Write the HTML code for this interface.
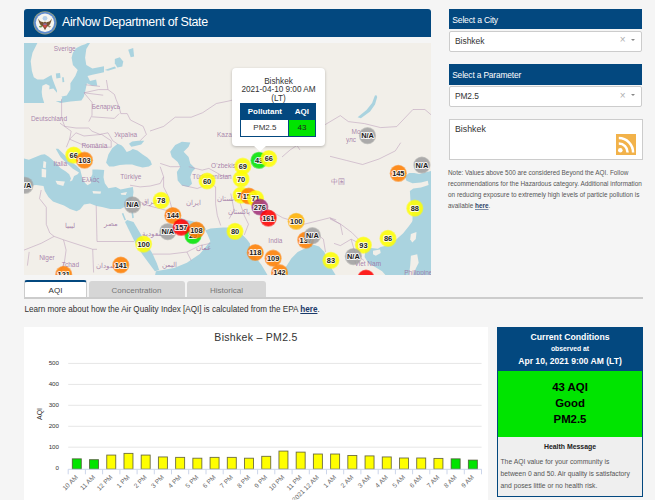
<!DOCTYPE html>
<html><head><meta charset="utf-8"><style>
*{box-sizing:border-box;margin:0;padding:0}
html,body{width:655px;height:500px;overflow:hidden;background:#f5f5f5;font-family:"Liberation Sans",sans-serif;color:#333}
.abs{position:absolute}
.t1{position:absolute;white-space:nowrap;line-height:1}
</style></head><body>
<div class="abs" style="left:24px;top:9px;width:407px;height:28px;background:#03487f;border-radius:3px 3px 0 0"></div>
<svg class="abs" style="left:33px;top:11px" width="24" height="24" viewBox="0 0 24 24">
  <circle cx="12" cy="11.8" r="11.6" fill="#a3a878"/>
  <circle cx="12" cy="11.8" r="10.9" fill="#5f8cd0"/>
  <circle cx="12" cy="11.8" r="9.2" fill="#f6f5ee"/>
  <circle cx="12" cy="7.3" r="2.4" fill="#b5d0ea"/>
  <path d="M5.3 7.6 Q5.8 14 10.3 16 L12 19.2 L13.7 16 Q18.2 14 18.7 7.6 Q17.5 10.5 15.5 10.8 Q14 11 13.2 11.6 L12 10.4 L10.8 11.6 Q10 11 8.5 10.8 Q6.5 10.5 5.3 7.6Z" fill="#75532f"/>
  <rect x="10.4" y="12.6" width="3.2" height="3.8" fill="#d04a4a"/>
  <rect x="10.4" y="12.6" width="3.2" height="1" fill="#6a8ad0"/>
  <ellipse cx="7.6" cy="15.6" rx="1.6" ry="0.9" fill="#6a9a50"/>
  <ellipse cx="16.4" cy="15.6" rx="1.4" ry="0.8" fill="#9a8a6a"/>
</svg>
<div class="t1" style="left:62px;top:15.5px;font-size:12.5px;color:#fff;letter-spacing:-0.38px">AirNow Department of State</div>

<div id="map" class="abs" style="left:24px;top:43px;width:407px;height:232px;background:#f2efe9;overflow:hidden">
<svg class="abs" style="left:0;top:0" width="407" height="232" viewBox="0 0 407 232">
<g transform="translate(-24 -43)">
<polygon points="24.0,43.0 37.4,43.0 32.5,52.8 30.7,61.3 31.9,71.1 33.8,77.2 37.4,79.6 43.5,79.6 49.6,76.0 51.5,75.0 52.7,79.6 55.1,85.7 57.0,90.6 57.0,94.3 54.5,96.7 50.3,96.7 49.0,91.9 49.6,85.7 46.0,83.9 42.3,85.7 41.7,91.9 42.3,96.7 44.2,103.0 24.0,103.0" fill="#aad3df"/>
<polygon points="87.5,43.0 90.0,43.0 86.3,49.1 85.1,57.7 86.3,65.0 92.4,68.6 104.0,66.2 104.0,72.3 92.4,74.8 87.5,76.0 90.0,80.9 96.1,79.6 97.3,85.7 92.4,85.7 86.9,83.3 85.1,91.9 83.8,96.7 81.4,100.4 70.4,101.6 60.6,103.0 54.5,100.4 58.2,99.2 60.6,96.7 66.7,95.5 70.4,89.4 70.4,83.3 75.3,76.0 77.7,69.9 72.9,65.0 71.6,57.7 72.9,52.8 76.5,47.9 81.4,45.4 85.1,44.2" fill="#aad3df"/>
<polygon points="55.8,73.5 60.0,72.9 60.6,77.8 56.4,78.4" fill="#aad3df"/>
<polygon points="62.1,77.2 63.7,77.2 64.3,82.1 62.5,82.3" fill="#aad3df"/>
<polygon points="114.8,66.5 116.1,68.2 108.0,70.7 104.7,69.9" fill="#aad3df"/>
<polygon points="114.8,59.0 119.8,57.3 123.2,61.5 122.3,66.5 117.3,67.4 114.8,63.2" fill="#aad3df"/>
<polygon points="128.2,49.7 133.2,48.0 134.1,56.4 130.7,57.3" fill="#aad3df"/>
<polygon points="24.0,158.4 28.9,159.7 35.0,157.2 41.1,154.8 44.8,154.2 48.4,156.6 50.9,158.4 55.8,163.3 60.6,168.2 65.5,171.3 69.2,174.3 71.0,178.6 69.8,181.6 72.2,180.4 74.1,176.1 77.7,174.3 79.0,172.5 72.9,168.8 66.7,163.3 60.6,157.2 57.0,151.1 55.8,148.7 58.2,148.7 64.3,154.8 70.4,160.9 76.5,165.8 80.2,169.4 81.4,174.3 82.6,179.2 85.1,182.9 87.5,185.3 91.2,182.9 90.0,179.2 92.4,174.3 92.4,169.4 97.3,169.4 104.2,169.9 103.5,177.2 104.8,183.3 108.4,188.2 115.8,187.0 120.6,189.4 126.7,188.2 132.9,187.0 133.5,191.9 132.9,196.8 130.4,201.6 128.0,205.3 120.6,209.0 110.2,209.0 102.0,207.0 96.5,206.0 90.0,203.5 84.0,204.5 80.0,209.5 76.6,211.2 70.0,209.0 64.0,205.5 57.0,203.0 53.0,201.5 48.4,197.0 44.8,191.0 43.5,186.0 36.2,185.0 24.0,186.0" fill="#aad3df"/>
<polygon points="106.1,162.8 108.4,154.4 112.2,148.3 117.6,143.7 121.4,145.3 123.7,147.6 126.7,152.1 130.5,150.6 132.8,149.1 137.4,150.6 142.7,154.4 147.3,157.5 150.4,160.5 151.9,164.4 148.9,166.6 142.7,167.4 136.6,165.9 132.1,164.4 126.0,164.4 119.8,165.1 113.7,166.6 109.2,166.6" fill="#aad3df"/>
<polygon points="129.0,143.7 132.1,141.5 138.2,140.7 144.3,140.7 141.2,144.5 135.1,146.0 131.3,146.8" fill="#aad3df"/>
<polygon points="170.2,151.8 175.2,145.1 181.9,141.8 190.3,142.6 188.6,146.8 183.6,151.8 188.6,156.9 190.3,163.6 195.3,168.6 192.0,172.0 190.3,177.0 192.0,183.7 188.6,187.1 181.9,185.4 177.7,180.4 176.9,172.0 180.2,166.9 177.7,161.9 171.8,156.9" fill="#aad3df"/>
<polygon points="127.1,219.9 133.5,222.1 139.9,232.7 146.3,243.4 152.7,254.1 157.0,263.7 159.2,270.1 154.9,271.2 148.5,262.7 142.1,254.1 135.6,243.4 129.2,230.6 125.0,222.1" fill="#aad3df"/>
<polygon points="121.8,213.5 123.3,213.1 126.0,219.9 124.5,220.3" fill="#aad3df"/>
<polygon points="131.4,211.4 132.9,211.4 133.9,217.8 132.2,218.2" fill="#aad3df"/>
<polygon points="180.5,217.8 186.9,219.9 195.5,222.1 204.0,226.3 206.2,229.5 201.9,230.6 195.5,231.7 191.2,227.4 184.8,224.2 180.5,221.0" fill="#aad3df"/>
<polygon points="154.9,275.9 155.9,271.2 174.1,268.0 186.9,262.7 199.8,254.1 210.4,241.3 207.2,233.8 205.1,230.6 210.4,228.5 223.3,227.4 236.1,227.4 240.4,232.7 246.8,239.2 250.0,243.4 250.0,275.9" fill="#aad3df"/>
<polygon points="240.0,232.7 246.4,243.4 252.8,254.1 261.4,264.8 267.8,275.5 269.9,275.9 240.0,275.9" fill="#aad3df"/>
<polygon points="280.6,275.9 285.9,266.9 291.3,258.4 297.7,252.0 306.3,247.7 312.7,244.5 319.1,246.6 324.4,252.0 327.6,260.5 331.9,269.1 336.2,275.9" fill="#aad3df"/>
<polygon points="432.0,170.6 426.1,172.3 419.3,174.0 414.2,173.1 409.1,173.1 404.8,176.5 406.5,180.8 412.5,183.3 421.0,182.5 427.8,180.8 428.6,185.0 421.0,187.6 413.3,188.4 409.9,191.0 410.4,199.5 411.6,207.9 412.5,216.4 412.5,224.9 432.0,224.9" fill="#aad3df"/>
<polygon points="415.8,215.0 413.0,220.6 408.8,226.2 403.2,233.3 396.2,239.6 387.8,245.2 380.7,247.0 377.9,248.7 370.9,248.0 365.3,250.1 364.6,257.1 368.1,262.8 375.1,267.0 382.1,271.2 386.3,276.0 432.0,276.0 432.0,215.0" fill="#aad3df"/>
<polygon points="376.2,95.0 377.2,97.0 375.0,104.5 370.1,111.5 360.9,118.2 357.6,117.2 366.5,109.9 372.1,102.9 374.8,95.8" fill="#aad3df"/>
<polygon points="49.2,89.2 53.4,88.4 57.6,93.4 62.3,97.1 61.0,101.0 49.2,101.0 47.5,95.1" fill="#f2efe9"/>
<polygon points="43.5,160.9 46.2,161.9 45.7,168.2 42.9,167.6" fill="#f2efe9"/>
<polygon points="41.7,168.8 46.2,169.4 46.0,177.4 41.7,177.0" fill="#f2efe9"/>
<polygon points="55.5,180.7 64.9,181.4 63.3,186.0 57.2,184.3" fill="#f2efe9"/>
<polygon points="92.5,191.0 101.1,191.6 100.5,193.8 93.2,193.5" fill="#f2efe9"/>
<polygon points="120.6,193.3 127.0,192.1 125.8,195.0 121.3,194.8" fill="#f2efe9"/>
<polygon points="373.0,250.8 380.0,249.4 380.7,252.9 375.8,255.7 373.0,254.3" fill="#f2efe9"/>
<polygon points="410.9,234.0 416.5,231.9 415.8,238.9 412.3,242.4 410.2,239.6" fill="#f2efe9"/>
<polygon points="410.9,255.7 417.2,254.3 418.7,262.8 415.8,268.4 413.0,276.0 408.8,276.0 410.2,265.6" fill="#f2efe9"/>
</g>
<g transform="translate(-24 -43)" fill="none" stroke="#b89ab8" stroke-width="0.7" stroke-opacity="0.75">
<polyline points="106.4,80.0 108.0,89.6 114.4,94.4 116.0,99.2 119.2,107.2 120.8,113.6 127.2,113.6 130.4,120.0 143.2,126.4 146.4,134.4 140.0,140.8"/>
<polyline points="84.0,92.8 98.4,89.6 108.0,89.6"/>
<polyline points="84.0,92.8 92.0,102.4 92.0,115.2 88.8,121.6"/>
<polyline points="92.0,116.8 114.4,118.4 119.2,113.6"/>
<polyline points="61.6,99.2 61.6,118.4 64.8,126.4 76.0,128.0 88.8,128.0"/>
<polyline points="88.8,128.0 92.0,131.2 100.0,134.4 108.0,132.8 112.8,140.8 117.6,144.0"/>
<polyline points="76.0,132.8 84.0,136.0 101.6,134.4 111.2,140.8 111.2,147.2 92.0,147.2 80.8,144.0 69.6,139.2"/>
<polyline points="84.0,92.8 103.2,95.2"/>
<polyline points="85.6,84.8 100.0,86.4"/>
<polyline points="60.0,123.2 71.2,131.2 69.6,139.2 66.4,147.2"/>
<polyline points="69.6,139.2 76.0,132.8"/>
<polyline points="150.0,131.0 163.7,126.4 175.2,117.2 191.2,117.2 202.7,112.7 216.4,103.5 227.9,101.2 232.4,100.1"/>
<polyline points="325.2,124.6 340.3,115.6 348.4,121.6 364.5,123.6 380.6,127.6 396.7,126.6 412.9,109.5 424.9,109.5 432.0,115.6"/>
<polyline points="330.0,156.3 346.3,160.4 362.6,164.5 379.0,159.0 395.3,150.9 400.7,142.7"/>
<polyline points="330.0,218.9 340.9,224.3 351.8,232.5 362.6,243.4"/>
<polyline points="325.2,124.6 318.0,128.0 305.0,140.0 290.0,150.0 282.0,157.0"/>
<polyline points="232.4,100.0 250.0,108.0 270.0,120.0 290.0,135.0 300.0,150.0"/>
<polyline points="41.2,190.0 39.5,198.6 46.3,207.2 46.3,224.4 49.8,233.0 54.1,236.4 63.5,239.8"/>
<polyline points="96.2,205.5 97.0,241.5"/>
<polyline points="63.5,239.8 92.7,249.3 97.0,249.3"/>
<polyline points="97.0,241.5 134.0,241.5"/>
<polyline points="63.5,239.8 66.1,250.1 64.4,262.2 58.4,275.9"/>
<polyline points="92.7,249.3 93.6,272.5"/>
<polyline points="24.0,250.1 41.2,243.3 54.1,236.4"/>
<polyline points="29.2,251.9 27.4,265.6"/>
<polyline points="130.0,185.2 140.1,186.9 150.2,186.0 160.2,183.5 163.6,176.8"/>
<polyline points="160.2,166.7 163.6,176.8"/>
<polyline points="163.6,176.8 163.6,186.9 168.6,196.9 172.0,208.7 178.7,213.7"/>
<polyline points="182.1,185.2 197.2,188.5 210.6,183.5 215.6,186.9"/>
<polyline points="215.6,186.9 215.6,203.7 217.3,215.4 220.7,225.5"/>
<polyline points="188.8,166.7 202.2,170.1 208.9,168.4 224.0,176.8 230.8,175.1"/>
<polyline points="230.8,193.6 234.1,210.4 229.1,218.8"/>
<polyline points="136.7,200.3 146.8,205.3 160.2,208.7 172.0,212.1"/>
<polyline points="160.2,163.4 170.3,166.7 180.4,166.7"/>
<polyline points="152.7,254.1 169.8,254.1 186.9,252.0 199.8,245.6 210.4,243.4"/>
<polyline points="186.9,252.0 191.2,260.5"/>
<polyline points="240.0,202.8 244.3,215.6 248.5,224.2 244.3,234.9"/>
<polyline points="267.8,209.2 282.7,217.8 304.1,224.2 312.7,222.1 329.8,217.8 336.2,219.9"/>
<polyline points="312.7,230.6 323.4,239.2 325.5,252.0"/>
<polyline points="334.0,243.4 340.4,245.6 351.1,239.2 359.7,243.4"/>
<polyline points="329.8,217.8 340.4,224.2 342.6,234.9"/>
<polyline points="351.1,239.2 355.4,254.1 364.0,260.5"/>
<polyline points="240.0,190.0 248.5,194.3 261.4,202.8 267.8,209.2"/>
</g>
<g transform="translate(-24 -43)" fill="#9a6fa0" fill-opacity="0.85" font-family="Liberation Sans, sans-serif" font-size="6.5" text-anchor="middle">
<text x="64.7" y="50.800000000000004">Sverige</text>
<text x="49" y="121.2">Deutschland</text>
<text x="106" y="108.7">Беларусь</text>
<text x="125.7" y="136.6">Україна</text>
<text x="94.4" y="147.89999999999998">România</text>
<text x="60.3" y="166.39999999999998">Italia</text>
<text x="90.5" y="181.79999999999998">Ελλάς</text>
<text x="130.8" y="178.5">Türkiye</text>
<text x="234" y="136.6">Kazakhstan</text>
<text x="228" y="168.39999999999998">O'zbekiston</text>
<text x="212" y="178.5">Türkmenistan</text>
<text x="193" y="205.39999999999998">ایران</text>
<text x="275.4" y="243.0">India</text>
<text x="338.2" y="184.2">中国</text>
<text x="367.8" y="265.8">Viet Nam</text>
<text x="46.9" y="259.8">Niger</text>
<text x="70.4" y="267.2">Tchad</text>
<text x="70.4" y="227.89999999999998">ليبيا</text>
<text x="110.7" y="226.2">مصر</text>
<text x="105.7" y="268.2">سودان</text>
<text x="203" y="249.7">عمان</text>
<text x="169.5" y="266.5">اليمن</text>
<text x="152.7" y="235.6">سعودية</text>
<text x="149.3" y="203.7">عراق</text>
<text x="356" y="134.2">Mo</text>
<text x="351" y="142.2">улс</text>
<text x="420" y="274.9">Philippines</text>
<text x="238.5" y="213.7">پاکستان</text>
<text x="230" y="201.0">افغانستان</text>
</g>
<g transform="translate(-24 -43)" font-family="Liberation Sans, sans-serif" font-weight="bold" font-size="7.4" text-anchor="middle">
<circle cx="25" cy="185.3" r="8.6" fill="#a0a0a0" fill-opacity="0.55"/><circle cx="25" cy="185.3" r="7.8" fill="#a0a0a0" fill-opacity="0.7"/>
<text x="25" y="187.9" fill="#1a1a1a" stroke="#fff" stroke-width="2" stroke-opacity="0.85" stroke-linejoin="round" paint-order="stroke">N/A</text>
<circle cx="73.7" cy="155.1" r="8.6" fill="#ffff00" fill-opacity="0.55"/><circle cx="73.7" cy="155.1" r="7.8" fill="#ffff00" fill-opacity="0.7"/>
<text x="73.7" y="157.7" fill="#1a1a1a" stroke="#fff" stroke-width="2" stroke-opacity="0.85" stroke-linejoin="round" paint-order="stroke">66</text>
<circle cx="84.5" cy="160.2" r="8.6" fill="#ff7e00" fill-opacity="0.55"/><circle cx="84.5" cy="160.2" r="7.8" fill="#ff7e00" fill-opacity="0.7"/>
<text x="84.5" y="162.8" fill="#1a1a1a" stroke="#fff" stroke-width="2" stroke-opacity="0.85" stroke-linejoin="round" paint-order="stroke">103</text>
<circle cx="132.5" cy="204.8" r="8.6" fill="#a0a0a0" fill-opacity="0.55"/><circle cx="132.5" cy="204.8" r="7.8" fill="#a0a0a0" fill-opacity="0.7"/>
<text x="132.5" y="207.4" fill="#1a1a1a" stroke="#fff" stroke-width="2" stroke-opacity="0.85" stroke-linejoin="round" paint-order="stroke">N/A</text>
<circle cx="161.2" cy="200.4" r="8.6" fill="#ffff00" fill-opacity="0.55"/><circle cx="161.2" cy="200.4" r="7.8" fill="#ffff00" fill-opacity="0.7"/>
<text x="161.2" y="203.0" fill="#1a1a1a" stroke="#fff" stroke-width="2" stroke-opacity="0.85" stroke-linejoin="round" paint-order="stroke">78</text>
<circle cx="207.1" cy="181" r="8.6" fill="#ffff00" fill-opacity="0.55"/><circle cx="207.1" cy="181" r="7.8" fill="#ffff00" fill-opacity="0.7"/>
<text x="207.1" y="183.6" fill="#1a1a1a" stroke="#fff" stroke-width="2" stroke-opacity="0.85" stroke-linejoin="round" paint-order="stroke">60</text>
<circle cx="172.8" cy="215.6" r="8.6" fill="#ff7e00" fill-opacity="0.55"/><circle cx="172.8" cy="215.6" r="7.8" fill="#ff7e00" fill-opacity="0.7"/>
<text x="172.8" y="218.2" fill="#1a1a1a" stroke="#fff" stroke-width="2" stroke-opacity="0.85" stroke-linejoin="round" paint-order="stroke">144</text>
<circle cx="167.8" cy="231.7" r="8.6" fill="#a0a0a0" fill-opacity="0.55"/><circle cx="167.8" cy="231.7" r="7.8" fill="#a0a0a0" fill-opacity="0.7"/>
<text x="167.8" y="234.3" fill="#1a1a1a" stroke="#fff" stroke-width="2" stroke-opacity="0.85" stroke-linejoin="round" paint-order="stroke">N/A</text>
<circle cx="193" cy="235.7" r="8.6" fill="#00e400" fill-opacity="0.55"/><circle cx="193" cy="235.7" r="7.8" fill="#00e400" fill-opacity="0.7"/>
<text x="193" y="238.3" fill="#1a1a1a" stroke="#fff" stroke-width="2" stroke-opacity="0.85" stroke-linejoin="round" paint-order="stroke">29</text>
<circle cx="196.4" cy="230" r="8.6" fill="#ff7e00" fill-opacity="0.55"/><circle cx="196.4" cy="230" r="7.8" fill="#ff7e00" fill-opacity="0.7"/>
<text x="196.4" y="232.6" fill="#1a1a1a" stroke="#fff" stroke-width="2" stroke-opacity="0.85" stroke-linejoin="round" paint-order="stroke">108</text>
<circle cx="181.2" cy="227.3" r="8.6" fill="#ff0000" fill-opacity="0.55"/><circle cx="181.2" cy="227.3" r="7.8" fill="#ff0000" fill-opacity="0.7"/>
<text x="181.2" y="229.9" fill="#1a1a1a" stroke="#fff" stroke-width="2" stroke-opacity="0.85" stroke-linejoin="round" paint-order="stroke">157</text>
<circle cx="235" cy="231.4" r="8.6" fill="#ffff00" fill-opacity="0.55"/><circle cx="235" cy="231.4" r="7.8" fill="#ffff00" fill-opacity="0.7"/>
<text x="235" y="234.0" fill="#1a1a1a" stroke="#fff" stroke-width="2" stroke-opacity="0.85" stroke-linejoin="round" paint-order="stroke">80</text>
<circle cx="143.6" cy="244.1" r="8.6" fill="#ffff00" fill-opacity="0.55"/><circle cx="143.6" cy="244.1" r="7.8" fill="#ffff00" fill-opacity="0.7"/>
<text x="143.6" y="246.7" fill="#1a1a1a" stroke="#fff" stroke-width="2" stroke-opacity="0.85" stroke-linejoin="round" paint-order="stroke">100</text>
<circle cx="120.8" cy="265" r="8.6" fill="#ff7e00" fill-opacity="0.55"/><circle cx="120.8" cy="265" r="7.8" fill="#ff7e00" fill-opacity="0.7"/>
<text x="120.8" y="267.6" fill="#1a1a1a" stroke="#fff" stroke-width="2" stroke-opacity="0.85" stroke-linejoin="round" paint-order="stroke">141</text>
<circle cx="63.7" cy="274.4" r="8.6" fill="#ff7e00" fill-opacity="0.55"/><circle cx="63.7" cy="274.4" r="7.8" fill="#ff7e00" fill-opacity="0.7"/>
<text x="63.7" y="277.0" fill="#1a1a1a" stroke="#fff" stroke-width="2" stroke-opacity="0.85" stroke-linejoin="round" paint-order="stroke">121</text>
<circle cx="242.8" cy="166.2" r="8.6" fill="#ffff00" fill-opacity="0.55"/><circle cx="242.8" cy="166.2" r="7.8" fill="#ffff00" fill-opacity="0.7"/>
<text x="242.8" y="168.8" fill="#1a1a1a" stroke="#fff" stroke-width="2" stroke-opacity="0.85" stroke-linejoin="round" paint-order="stroke">69</text>
<circle cx="241.1" cy="179" r="8.6" fill="#ffff00" fill-opacity="0.55"/><circle cx="241.1" cy="179" r="7.8" fill="#ffff00" fill-opacity="0.7"/>
<text x="241.1" y="181.6" fill="#1a1a1a" stroke="#fff" stroke-width="2" stroke-opacity="0.85" stroke-linejoin="round" paint-order="stroke">70</text>
<circle cx="259" cy="160.3" r="8.6" fill="#00e400" fill-opacity="0.55"/><circle cx="259" cy="160.3" r="7.8" fill="#00e400" fill-opacity="0.7"/>
<text x="259" y="162.9" fill="#1a1a1a" stroke="#fff" stroke-width="2" stroke-opacity="0.85" stroke-linejoin="round" paint-order="stroke">43</text>
<circle cx="268.8" cy="158.6" r="8.6" fill="#ffff00" fill-opacity="0.55"/><circle cx="268.8" cy="158.6" r="7.8" fill="#ffff00" fill-opacity="0.7"/>
<text x="268.8" y="161.2" fill="#1a1a1a" stroke="#fff" stroke-width="2" stroke-opacity="0.85" stroke-linejoin="round" paint-order="stroke">66</text>
<circle cx="241.1" cy="195.1" r="8.6" fill="#ffff00" fill-opacity="0.55"/><circle cx="241.1" cy="195.1" r="7.8" fill="#ffff00" fill-opacity="0.7"/>
<text x="241.1" y="197.7" fill="#1a1a1a" stroke="#fff" stroke-width="2" stroke-opacity="0.85" stroke-linejoin="round" paint-order="stroke">73</text>
<circle cx="248.8" cy="196" r="8.6" fill="#ff7e00" fill-opacity="0.55"/><circle cx="248.8" cy="196" r="7.8" fill="#ff7e00" fill-opacity="0.7"/>
<text x="248.8" y="198.6" fill="#1a1a1a" stroke="#fff" stroke-width="2" stroke-opacity="0.85" stroke-linejoin="round" paint-order="stroke">151</text>
<circle cx="255.6" cy="198.5" r="8.6" fill="#ffff00" fill-opacity="0.55"/><circle cx="255.6" cy="198.5" r="7.8" fill="#ffff00" fill-opacity="0.7"/>
<text x="255.6" y="201.1" fill="#1a1a1a" stroke="#fff" stroke-width="2" stroke-opacity="0.85" stroke-linejoin="round" paint-order="stroke">71</text>
<circle cx="259.8" cy="207" r="8.6" fill="#a02f78" fill-opacity="0.55"/><circle cx="259.8" cy="207" r="7.8" fill="#a02f78" fill-opacity="0.7"/>
<text x="259.8" y="209.6" fill="#1a1a1a" stroke="#fff" stroke-width="2" stroke-opacity="0.85" stroke-linejoin="round" paint-order="stroke">276</text>
<circle cx="268.3" cy="218.1" r="8.6" fill="#ff0000" fill-opacity="0.55"/><circle cx="268.3" cy="218.1" r="7.8" fill="#ff0000" fill-opacity="0.7"/>
<text x="268.3" y="220.7" fill="#1a1a1a" stroke="#fff" stroke-width="2" stroke-opacity="0.85" stroke-linejoin="round" paint-order="stroke">161</text>
<circle cx="296.2" cy="221.3" r="8.6" fill="#ffb000" fill-opacity="0.55"/><circle cx="296.2" cy="221.3" r="7.8" fill="#ffb000" fill-opacity="0.7"/>
<text x="296.2" y="223.9" fill="#1a1a1a" stroke="#fff" stroke-width="2" stroke-opacity="0.85" stroke-linejoin="round" paint-order="stroke">100</text>
<circle cx="305.7" cy="240.1" r="8.6" fill="#ff7e00" fill-opacity="0.55"/><circle cx="305.7" cy="240.1" r="7.8" fill="#ff7e00" fill-opacity="0.7"/>
<text x="305.7" y="242.7" fill="#1a1a1a" stroke="#fff" stroke-width="2" stroke-opacity="0.85" stroke-linejoin="round" paint-order="stroke">137</text>
<circle cx="312.4" cy="235.7" r="8.6" fill="#a0a0a0" fill-opacity="0.55"/><circle cx="312.4" cy="235.7" r="7.8" fill="#a0a0a0" fill-opacity="0.7"/>
<text x="312.4" y="238.3" fill="#1a1a1a" stroke="#fff" stroke-width="2" stroke-opacity="0.85" stroke-linejoin="round" paint-order="stroke">N/A</text>
<circle cx="255.3" cy="252.5" r="8.6" fill="#ff7e00" fill-opacity="0.55"/><circle cx="255.3" cy="252.5" r="7.8" fill="#ff7e00" fill-opacity="0.7"/>
<text x="255.3" y="255.1" fill="#1a1a1a" stroke="#fff" stroke-width="2" stroke-opacity="0.85" stroke-linejoin="round" paint-order="stroke">118</text>
<circle cx="273.1" cy="258.2" r="8.6" fill="#ff7e00" fill-opacity="0.55"/><circle cx="273.1" cy="258.2" r="7.8" fill="#ff7e00" fill-opacity="0.7"/>
<text x="273.1" y="260.8" fill="#1a1a1a" stroke="#fff" stroke-width="2" stroke-opacity="0.85" stroke-linejoin="round" paint-order="stroke">109</text>
<circle cx="279.5" cy="272.7" r="8.6" fill="#ff7e00" fill-opacity="0.55"/><circle cx="279.5" cy="272.7" r="7.8" fill="#ff7e00" fill-opacity="0.7"/>
<text x="279.5" y="275.3" fill="#1a1a1a" stroke="#fff" stroke-width="2" stroke-opacity="0.85" stroke-linejoin="round" paint-order="stroke">142</text>
<circle cx="330.9" cy="260.3" r="8.6" fill="#ffff00" fill-opacity="0.55"/><circle cx="330.9" cy="260.3" r="7.8" fill="#ffff00" fill-opacity="0.7"/>
<text x="330.9" y="262.9" fill="#1a1a1a" stroke="#fff" stroke-width="2" stroke-opacity="0.85" stroke-linejoin="round" paint-order="stroke">83</text>
<circle cx="363.4" cy="245.1" r="8.6" fill="#ffff00" fill-opacity="0.55"/><circle cx="363.4" cy="245.1" r="7.8" fill="#ffff00" fill-opacity="0.7"/>
<text x="363.4" y="247.7" fill="#1a1a1a" stroke="#fff" stroke-width="2" stroke-opacity="0.85" stroke-linejoin="round" paint-order="stroke">93</text>
<circle cx="353.4" cy="256.6" r="8.6" fill="#a0a0a0" fill-opacity="0.55"/><circle cx="353.4" cy="256.6" r="7.8" fill="#a0a0a0" fill-opacity="0.7"/>
<text x="353.4" y="259.2" fill="#1a1a1a" stroke="#fff" stroke-width="2" stroke-opacity="0.85" stroke-linejoin="round" paint-order="stroke">N/A</text>
<circle cx="388" cy="238.4" r="8.6" fill="#ffff00" fill-opacity="0.55"/><circle cx="388" cy="238.4" r="7.8" fill="#ffff00" fill-opacity="0.7"/>
<text x="388" y="241.0" fill="#1a1a1a" stroke="#fff" stroke-width="2" stroke-opacity="0.85" stroke-linejoin="round" paint-order="stroke">86</text>
<circle cx="414.8" cy="208.2" r="8.6" fill="#ffff00" fill-opacity="0.55"/><circle cx="414.8" cy="208.2" r="7.8" fill="#ffff00" fill-opacity="0.7"/>
<text x="414.8" y="210.8" fill="#1a1a1a" stroke="#fff" stroke-width="2" stroke-opacity="0.85" stroke-linejoin="round" paint-order="stroke">88</text>
<circle cx="398.3" cy="173.3" r="8.6" fill="#ff7e00" fill-opacity="0.55"/><circle cx="398.3" cy="173.3" r="7.8" fill="#ff7e00" fill-opacity="0.7"/>
<text x="398.3" y="175.9" fill="#1a1a1a" stroke="#fff" stroke-width="2" stroke-opacity="0.85" stroke-linejoin="round" paint-order="stroke">145</text>
<circle cx="421.9" cy="165" r="8.6" fill="#a0a0a0" fill-opacity="0.55"/><circle cx="421.9" cy="165" r="7.8" fill="#a0a0a0" fill-opacity="0.7"/>
<text x="421.9" y="167.6" fill="#1a1a1a" stroke="#fff" stroke-width="2" stroke-opacity="0.85" stroke-linejoin="round" paint-order="stroke">N/A</text>
<circle cx="367.5" cy="135.7" r="8.6" fill="#a0a0a0" fill-opacity="0.55"/><circle cx="367.5" cy="135.7" r="7.8" fill="#a0a0a0" fill-opacity="0.7"/>
<text x="367.5" y="138.3" fill="#1a1a1a" stroke="#fff" stroke-width="2" stroke-opacity="0.85" stroke-linejoin="round" paint-order="stroke">N/A</text>
<circle cx="366" cy="278" r="8.6" fill="#ff0000" fill-opacity="0.55"/><circle cx="366" cy="278" r="7.8" fill="#ff0000" fill-opacity="0.7"/>
</g>
</svg>
<div class="abs" style="left:208px;top:25px;width:93px;height:78px;background:#fff;border-radius:4px;box-shadow:0 1px 3px rgba(0,0,0,.25)"></div>
<svg class="abs" style="left:229px;top:102px" width="14" height="8" viewBox="0 0 14 8"><path d="M0 0 L7 6.5 L14 0Z" fill="#fff"/></svg>
<div class="abs" style="left:208px;top:34.6px;width:93px;text-align:center;font-size:8.2px;line-height:8.8px;color:#333">Bishkek<br>2021-04-10 9:00 AM<br>(LT)</div>
<div class="abs" style="left:216.4px;top:60px;width:76px;height:34px;border:1px solid #03487f;background:#fff"></div>
<div class="abs" style="left:217.4px;top:61px;width:74px;height:16px;background:#03487f"></div>
<div class="abs" style="left:264.4px;top:77px;width:27px;height:16px;background:#00e400;border-left:1px solid #03487f"></div>
<div class="t1" style="left:217.4px;top:64.5px;width:47px;text-align:center;color:#fff;font-weight:bold;font-size:8px">Pollutant</div>
<div class="t1" style="left:264.4px;top:64.5px;width:27px;text-align:center;color:#fff;font-weight:bold;font-size:8px">AQI</div>
<div class="t1" style="left:217.4px;top:80.5px;width:47px;text-align:center;color:#333;font-size:8px">PM2.5</div>
<div class="t1" style="left:264.4px;top:80.5px;width:27px;text-align:center;color:#222;font-size:8px">43</div>
</div>

<div class="abs" style="left:449px;top:9px;width:193px;height:20px;background:#03487f"></div>
<div class="t1" style="left:452.3px;top:15.8px;font-size:8.6px;color:#fff;letter-spacing:-0.2px">Select a City</div>
<div class="abs" style="left:449px;top:31px;width:193px;height:20.6px;background:#fff;border:1px solid #ccc;border-radius:2px"></div>
<div class="t1" style="left:455px;top:37px;font-size:8.5px;color:#333;letter-spacing:-0.05px">Bishkek</div>
<div class="t1" style="left:619.8px;top:35.2px;font-size:10px;color:#b0b0b0">×</div>
<div class="abs" style="left:630.5px;top:39px;width:0;height:0;border-left:2.6px solid transparent;border-right:2.6px solid transparent;border-top:2.6px solid #888"></div>

<div class="abs" style="left:449px;top:64px;width:193px;height:21px;background:#03487f"></div>
<div class="t1" style="left:452.2px;top:71px;font-size:8.4px;color:#fff;letter-spacing:-0.15px">Select a Parameter</div>
<div class="abs" style="left:449px;top:86px;width:193px;height:21px;background:#fff;border:1px solid #ccc;border-radius:2px"></div>
<div class="t1" style="left:455px;top:92px;font-size:8.4px;color:#333;letter-spacing:-0.1px">PM2.5</div>
<div class="t1" style="left:619.8px;top:90.5px;font-size:10px;color:#b0b0b0">×</div>
<div class="abs" style="left:630.5px;top:94.4px;width:0;height:0;border-left:2.6px solid transparent;border-right:2.6px solid transparent;border-top:2.6px solid #888"></div>

<div class="abs" style="left:449px;top:119px;width:194px;height:41px;background:#fff;border:1px solid #ccc"></div>
<div class="t1" style="left:455px;top:124.8px;font-size:8.8px;color:#333;">Bishkek</div>
<svg class="abs" style="left:616px;top:133.5px" width="20" height="21" viewBox="0 0 20 21">
  <rect width="20" height="21" fill="#f2b24a"/>
  <circle cx="4.3" cy="16.3" r="2.3" fill="#fff"/>
  <path d="M2.8 9.6 A8.8 8.8 0 0 1 11.6 18.4" stroke="#fff" stroke-width="2.5" fill="none"/>
  <path d="M2.8 4.1 A14.3 14.3 0 0 1 17.1 18.4" stroke="#fff" stroke-width="2.5" fill="none"/>
</svg>
<div class="abs" style="left:448px;top:168px;width:196px;font-size:6.4px;line-height:11.2px;color:#555;margin-top:-1.3px">Note: Values above 500 are considered Beyond the AQI. Follow recommendations for the Hazardous category. Additional information on reducing exposure to extremely high levels of particle pollution is available <b style="color:#2a3f66;text-decoration:underline;text-decoration-color:#7f8fa8">here</b>.</div>

<div class="abs" style="left:24px;top:280px;width:63px;height:19px;background:#fff;border:1px solid #ccc;border-top:2px solid #03487f;border-bottom:none;border-radius:3px 3px 0 0"></div>
<div class="abs" style="left:88.5px;top:281px;width:96px;height:17px;background:#d6d6d6;border-radius:3px 3px 0 0"></div>
<div class="abs" style="left:187px;top:281px;width:79px;height:17px;background:#d6d6d6;border-radius:3px 3px 0 0"></div>
<div class="abs" style="left:24px;top:297px;width:619px;height:2px;background:#ccc"></div>
<div class="t1" style="left:24px;top:286.5px;width:63px;text-align:center;font-size:8px;color:#333">AQI</div>
<div class="t1" style="left:88.5px;top:286.5px;width:96px;text-align:center;font-size:8px;color:#777">Concentration</div>
<div class="t1" style="left:187px;top:286.5px;width:79px;text-align:center;font-size:8px;color:#777">Historical</div>
<div class="t1" style="left:24.5px;top:305.9px;font-size:8.15px;color:#333">Learn more about how the Air Quality Index [AQI] is calculated from the EPA <b style="text-decoration:underline;color:#1a3a6a">here</b>.</div>

<div class="abs" style="left:24px;top:327px;width:464px;height:173px;background:#fff">
<svg class="abs" style="left:0;top:0" width="464" height="173" viewBox="0 0 464 173" font-family="Liberation Sans, sans-serif">
<text x="232" y="13.6" text-anchor="middle" font-size="10.5" letter-spacing="0.3" fill="#333">Bishkek – PM2.5</text>
<text x="0" y="0" font-size="7" fill="#333" transform="translate(18.3 87) rotate(-90)" text-anchor="middle">AQI</text>
<text x="35.0" y="143.2" text-anchor="end" font-size="6.2" fill="#333">0</text>
<line x1="44.2" x2="457.6" y1="120.2" y2="120.2" stroke="#e6e6e6" stroke-width="1"/>
<text x="35.0" y="122.2" text-anchor="end" font-size="6.2" fill="#333">100</text>
<line x1="44.2" x2="457.6" y1="99.3" y2="99.3" stroke="#e6e6e6" stroke-width="1"/>
<text x="35.0" y="101.3" text-anchor="end" font-size="6.2" fill="#333">200</text>
<line x1="44.2" x2="457.6" y1="78.3" y2="78.3" stroke="#e6e6e6" stroke-width="1"/>
<text x="35.0" y="80.3" text-anchor="end" font-size="6.2" fill="#333">300</text>
<line x1="44.2" x2="457.6" y1="57.4" y2="57.4" stroke="#e6e6e6" stroke-width="1"/>
<text x="35.0" y="59.4" text-anchor="end" font-size="6.2" fill="#333">400</text>
<line x1="44.2" x2="457.6" y1="36.4" y2="36.4" stroke="#e6e6e6" stroke-width="1"/>
<text x="35.0" y="38.4" text-anchor="end" font-size="6.2" fill="#333">500</text>
<rect x="48.31" y="131.83" width="9.00" height="10.27" fill="#00e400" stroke="#4a4a30" stroke-opacity="0.8" stroke-width="0.9"/>
<rect x="65.53" y="132.67" width="9.00" height="9.43" fill="#00e400" stroke="#4a4a30" stroke-opacity="0.8" stroke-width="0.9"/>
<rect x="82.75" y="128.06" width="9.00" height="14.04" fill="#ffff00" stroke="#4a4a30" stroke-opacity="0.8" stroke-width="0.9"/>
<rect x="99.97" y="126.38" width="9.00" height="15.72" fill="#ffff00" stroke="#4a4a30" stroke-opacity="0.8" stroke-width="0.9"/>
<rect x="117.19" y="128.06" width="9.00" height="14.04" fill="#ffff00" stroke="#4a4a30" stroke-opacity="0.8" stroke-width="0.9"/>
<rect x="134.41" y="129.94" width="9.00" height="12.16" fill="#ffff00" stroke="#4a4a30" stroke-opacity="0.8" stroke-width="0.9"/>
<rect x="151.63" y="130.36" width="9.00" height="11.74" fill="#ffff00" stroke="#4a4a30" stroke-opacity="0.8" stroke-width="0.9"/>
<rect x="168.85" y="131.20" width="9.00" height="10.90" fill="#ffff00" stroke="#4a4a30" stroke-opacity="0.8" stroke-width="0.9"/>
<rect x="186.07" y="130.36" width="9.00" height="11.74" fill="#ffff00" stroke="#4a4a30" stroke-opacity="0.8" stroke-width="0.9"/>
<rect x="203.29" y="130.36" width="9.00" height="11.74" fill="#ffff00" stroke="#4a4a30" stroke-opacity="0.8" stroke-width="0.9"/>
<rect x="220.51" y="131.20" width="9.00" height="10.90" fill="#ffff00" stroke="#4a4a30" stroke-opacity="0.8" stroke-width="0.9"/>
<rect x="237.73" y="129.31" width="9.00" height="12.79" fill="#ffff00" stroke="#4a4a30" stroke-opacity="0.8" stroke-width="0.9"/>
<rect x="254.95" y="124.07" width="9.00" height="18.03" fill="#ffff00" stroke="#4a4a30" stroke-opacity="0.8" stroke-width="0.9"/>
<rect x="272.17" y="125.12" width="9.00" height="16.98" fill="#ffff00" stroke="#4a4a30" stroke-opacity="0.8" stroke-width="0.9"/>
<rect x="289.39" y="127.01" width="9.00" height="15.09" fill="#ffff00" stroke="#4a4a30" stroke-opacity="0.8" stroke-width="0.9"/>
<rect x="306.61" y="127.01" width="9.00" height="15.09" fill="#ffff00" stroke="#4a4a30" stroke-opacity="0.8" stroke-width="0.9"/>
<rect x="323.83" y="128.48" width="9.00" height="13.62" fill="#ffff00" stroke="#4a4a30" stroke-opacity="0.8" stroke-width="0.9"/>
<rect x="341.05" y="128.90" width="9.00" height="13.20" fill="#ffff00" stroke="#4a4a30" stroke-opacity="0.8" stroke-width="0.9"/>
<rect x="358.27" y="129.94" width="9.00" height="12.16" fill="#ffff00" stroke="#4a4a30" stroke-opacity="0.8" stroke-width="0.9"/>
<rect x="375.49" y="130.99" width="9.00" height="11.11" fill="#ffff00" stroke="#4a4a30" stroke-opacity="0.8" stroke-width="0.9"/>
<rect x="392.71" y="130.99" width="9.00" height="11.11" fill="#ffff00" stroke="#4a4a30" stroke-opacity="0.8" stroke-width="0.9"/>
<rect x="409.93" y="131.41" width="9.00" height="10.69" fill="#ffff00" stroke="#4a4a30" stroke-opacity="0.8" stroke-width="0.9"/>
<rect x="427.15" y="131.83" width="9.00" height="10.27" fill="#00e400" stroke="#4a4a30" stroke-opacity="0.8" stroke-width="0.9"/>
<rect x="444.37" y="133.09" width="9.00" height="9.01" fill="#00e400" stroke="#4a4a30" stroke-opacity="0.8" stroke-width="0.9"/>
<line x1="44.2" x2="457.6" y1="142.3" y2="142.3" stroke="#ccd6eb" stroke-width="1"/>
<line x1="44.2" x2="44.2" y1="142.3" y2="147.3" stroke="#ccd6eb" stroke-width="1"/>
<line x1="61.4" x2="61.4" y1="142.3" y2="147.3" stroke="#ccd6eb" stroke-width="1"/>
<line x1="78.6" x2="78.6" y1="142.3" y2="147.3" stroke="#ccd6eb" stroke-width="1"/>
<line x1="95.9" x2="95.9" y1="142.3" y2="147.3" stroke="#ccd6eb" stroke-width="1"/>
<line x1="113.1" x2="113.1" y1="142.3" y2="147.3" stroke="#ccd6eb" stroke-width="1"/>
<line x1="130.3" x2="130.3" y1="142.3" y2="147.3" stroke="#ccd6eb" stroke-width="1"/>
<line x1="147.5" x2="147.5" y1="142.3" y2="147.3" stroke="#ccd6eb" stroke-width="1"/>
<line x1="164.7" x2="164.7" y1="142.3" y2="147.3" stroke="#ccd6eb" stroke-width="1"/>
<line x1="182.0" x2="182.0" y1="142.3" y2="147.3" stroke="#ccd6eb" stroke-width="1"/>
<line x1="199.2" x2="199.2" y1="142.3" y2="147.3" stroke="#ccd6eb" stroke-width="1"/>
<line x1="216.4" x2="216.4" y1="142.3" y2="147.3" stroke="#ccd6eb" stroke-width="1"/>
<line x1="233.6" x2="233.6" y1="142.3" y2="147.3" stroke="#ccd6eb" stroke-width="1"/>
<line x1="250.8" x2="250.8" y1="142.3" y2="147.3" stroke="#ccd6eb" stroke-width="1"/>
<line x1="268.1" x2="268.1" y1="142.3" y2="147.3" stroke="#ccd6eb" stroke-width="1"/>
<line x1="285.3" x2="285.3" y1="142.3" y2="147.3" stroke="#ccd6eb" stroke-width="1"/>
<line x1="302.5" x2="302.5" y1="142.3" y2="147.3" stroke="#ccd6eb" stroke-width="1"/>
<line x1="319.7" x2="319.7" y1="142.3" y2="147.3" stroke="#ccd6eb" stroke-width="1"/>
<line x1="336.9" x2="336.9" y1="142.3" y2="147.3" stroke="#ccd6eb" stroke-width="1"/>
<line x1="354.2" x2="354.2" y1="142.3" y2="147.3" stroke="#ccd6eb" stroke-width="1"/>
<line x1="371.4" x2="371.4" y1="142.3" y2="147.3" stroke="#ccd6eb" stroke-width="1"/>
<line x1="388.6" x2="388.6" y1="142.3" y2="147.3" stroke="#ccd6eb" stroke-width="1"/>
<line x1="405.8" x2="405.8" y1="142.3" y2="147.3" stroke="#ccd6eb" stroke-width="1"/>
<line x1="423.0" x2="423.0" y1="142.3" y2="147.3" stroke="#ccd6eb" stroke-width="1"/>
<line x1="440.3" x2="440.3" y1="142.3" y2="147.3" stroke="#ccd6eb" stroke-width="1"/>
<line x1="457.5" x2="457.5" y1="142.3" y2="147.3" stroke="#ccd6eb" stroke-width="1"/>
<text x="54.3" y="150.7" text-anchor="end" font-size="6.5" fill="#666" transform="rotate(-45 54.3 150.7)">10 AM</text>
<text x="71.5" y="150.7" text-anchor="end" font-size="6.5" fill="#666" transform="rotate(-45 71.5 150.7)">11 AM</text>
<text x="88.8" y="150.7" text-anchor="end" font-size="6.5" fill="#666" transform="rotate(-45 88.8 150.7)">12 PM</text>
<text x="106.0" y="150.7" text-anchor="end" font-size="6.5" fill="#666" transform="rotate(-45 106.0 150.7)">1 PM</text>
<text x="123.2" y="150.7" text-anchor="end" font-size="6.5" fill="#666" transform="rotate(-45 123.2 150.7)">2 PM</text>
<text x="140.4" y="150.7" text-anchor="end" font-size="6.5" fill="#666" transform="rotate(-45 140.4 150.7)">3 PM</text>
<text x="157.6" y="150.7" text-anchor="end" font-size="6.5" fill="#666" transform="rotate(-45 157.6 150.7)">4 PM</text>
<text x="174.8" y="150.7" text-anchor="end" font-size="6.5" fill="#666" transform="rotate(-45 174.8 150.7)">5 PM</text>
<text x="192.1" y="150.7" text-anchor="end" font-size="6.5" fill="#666" transform="rotate(-45 192.1 150.7)">6 PM</text>
<text x="209.3" y="150.7" text-anchor="end" font-size="6.5" fill="#666" transform="rotate(-45 209.3 150.7)">7 PM</text>
<text x="226.5" y="150.7" text-anchor="end" font-size="6.5" fill="#666" transform="rotate(-45 226.5 150.7)">8 PM</text>
<text x="243.7" y="150.7" text-anchor="end" font-size="6.5" fill="#666" transform="rotate(-45 243.7 150.7)">9 PM</text>
<text x="260.9" y="150.7" text-anchor="end" font-size="6.5" fill="#666" transform="rotate(-45 260.9 150.7)">10 PM</text>
<text x="278.2" y="150.7" text-anchor="end" font-size="6.5" fill="#666" transform="rotate(-45 278.2 150.7)">11 PM</text>
<text x="295.4" y="150.7" text-anchor="end" font-size="6.5" fill="#666" transform="rotate(-45 295.4 150.7)">Apr 11, 2021 12 AM</text>
<text x="312.6" y="150.7" text-anchor="end" font-size="6.5" fill="#666" transform="rotate(-45 312.6 150.7)">1 AM</text>
<text x="329.8" y="150.7" text-anchor="end" font-size="6.5" fill="#666" transform="rotate(-45 329.8 150.7)">2 AM</text>
<text x="347.0" y="150.7" text-anchor="end" font-size="6.5" fill="#666" transform="rotate(-45 347.0 150.7)">3 AM</text>
<text x="364.3" y="150.7" text-anchor="end" font-size="6.5" fill="#666" transform="rotate(-45 364.3 150.7)">4 AM</text>
<text x="381.5" y="150.7" text-anchor="end" font-size="6.5" fill="#666" transform="rotate(-45 381.5 150.7)">5 AM</text>
<text x="398.7" y="150.7" text-anchor="end" font-size="6.5" fill="#666" transform="rotate(-45 398.7 150.7)">6 AM</text>
<text x="415.9" y="150.7" text-anchor="end" font-size="6.5" fill="#666" transform="rotate(-45 415.9 150.7)">7 AM</text>
<text x="433.1" y="150.7" text-anchor="end" font-size="6.5" fill="#666" transform="rotate(-45 433.1 150.7)">8 AM</text>
<text x="450.4" y="150.7" text-anchor="end" font-size="6.5" fill="#666" transform="rotate(-45 450.4 150.7)">9 AM</text>
</svg></div>

<div class="abs" style="left:497px;top:327px;width:146px;height:170px;border:1px solid #03487f;background:#efefef"></div>
<div class="abs" style="left:498px;top:328px;width:144px;height:43px;background:#03487f"></div>
<div class="abs" style="left:498px;top:371px;width:144px;height:66px;background:#00e400"></div>
<div class="t1" style="left:498px;top:332.8px;width:144px;text-align:center;font-weight:bold;color:#fff;font-size:8.7px">Current Conditions</div>
<div class="t1" style="left:498px;top:345.8px;width:144px;text-align:center;font-weight:bold;color:#fff;font-size:6.8px">observed at</div>
<div class="t1" style="left:498px;top:356.8px;width:144px;text-align:center;font-weight:bold;color:#fff;font-size:8.6px">Apr 10, 2021 9:00 AM (LT)</div>
<div class="t1" style="left:498px;top:381.6px;width:144px;text-align:center;font-weight:bold;color:#000;font-size:11.4px">43 AQI</div>
<div class="t1" style="left:498px;top:398px;width:144px;text-align:center;font-weight:bold;color:#000;font-size:11.4px">Good</div>
<div class="t1" style="left:498px;top:414.4px;width:144px;text-align:center;font-weight:bold;color:#000;font-size:11.4px">PM2.5</div>
<div class="t1" style="left:498px;top:444.2px;width:144px;text-align:center;font-weight:bold;color:#222;font-size:6.9px">Health Message</div>
<div class="abs" style="left:500.5px;top:456.3px;width:136px;font-size:6.75px;line-height:12.1px;color:#555">The AQI value for your community is between 0 and 50. Air quality is satisfactory and poses little or no health risk.</div>
</body></html>
